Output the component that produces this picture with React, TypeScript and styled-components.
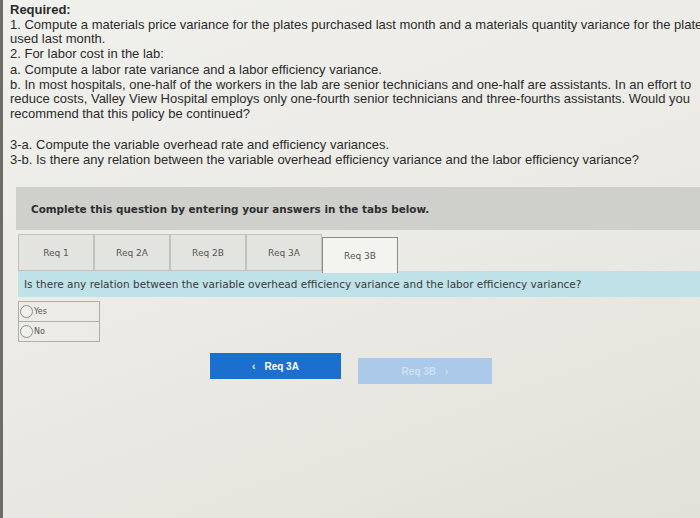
import React from 'react';
import styled, {createGlobalStyle} from 'styled-components';

const Global = createGlobalStyle`
    html, body {
        margin:0;
        padding:0;
        background:#e6e5de;
    }
`

const Screen = styled.div`
    width:700px;
    height:518px;
    overflow:hidden;
    box-sizing:border-box;
    border-left:3px solid #6e6c64;
    background:linear-gradient(160deg, #f0f0ec 0%, #ecebe6 45%, #e2e1d9 100%);
    display:flex;
    flex-direction:column;
`

const Prompt = styled.div`
    padding:3px 0 0 7px;
    font-family:"Liberation Sans", Arial, sans-serif;
    font-size:13px;
    line-height:14.5px;
    color:#2b2b2b;
`

const Line = styled.div<{$gap?: number, $bold?: boolean}>`
    white-space:nowrap;
    margin-top:${p => p.$gap || 0}px;
    font-weight:${p => p.$bold ? 700 : 400};
`

const Panel = styled.div`
    margin:20px 0 0 13px;
    display:flex;
    flex-direction:column;
`

const Banner = styled.div`
    height:43px;
    background:#cfcfcb;
    display:flex;
    align-items:center;
    padding-left:15px;
    font-family:"DejaVu Sans", Verdana, sans-serif;
    font-size:10.4px;
    font-weight:700;
    color:#2e2e2e;
`

const TabRow = styled.div`
    margin:3px 0 0 2px;
    display:flex;
    align-items:flex-end;
    height:38px;
`

const Tab = styled.div<{$active?: boolean}>`
    width:76px;
    height:${p => p.$active ? 36 : 37}px;
    box-sizing:border-box;
    border:1px solid ${p => p.$active ? '#8d8d88' : '#c2c2bd'};
    border-bottom:${p => p.$active ? 'none' : '1px solid #c2c2bd'};
    background:${p => p.$active ? '#f3f3ef' : '#e3e3df'};
    display:flex;
    align-items:center;
    justify-content:center;
    font-family:"DejaVu Sans", Verdana, sans-serif;
    font-size:9px;
    color:#555;
    margin-bottom:${p => p.$active ? -2 : 0}px;
    position:relative;
    z-index:${p => p.$active ? 1 : 0};
`

const Question = styled.div`
    margin-left:2px;
    height:26px;
    background:#bfe1e8;
    display:flex;
    align-items:center;
    padding-left:6px;
    font-family:"DejaVu Sans", Verdana, sans-serif;
    font-size:10.5px;
    color:#3a3a3a;
    white-space:nowrap;
`

const Options = styled.div`
    margin:4px 0 0 2px;
    width:80px;
    border:1px solid #aeaea9;
    display:flex;
    flex-direction:column;
`

const Option = styled.label`
    height:19px;
    display:flex;
    align-items:center;
    gap:1px;
    font-family:"DejaVu Sans", Verdana, sans-serif;
    font-size:8px;
    color:#555;
    &:not(:last-child){
        border-bottom:1px solid #aeaea9;
    }
`

const Radio = styled.span`
    width:11px;
    height:11px;
    margin-left:1px;
    border-radius:50%;
    border:1px solid #8f8f8a;
    background:#efefeb;
`

const Nav = styled.div`
    margin:11px 0 0 194px;
    display:flex;
    align-items:flex-start;
    gap:17px;
`

const NavButton = styled.div<{$disabled?: boolean}>`
    width:${p => p.$disabled ? 134 : 131}px;
    height:26px;
    margin-top:${p => p.$disabled ? 5 : 0}px;
    background:${p => p.$disabled ? '#abc9e8' : '#1b6fcf'};
    color:${p => p.$disabled ? '#cfe0f2' : '#fff'};
    display:flex;
    align-items:center;
    justify-content:center;
    gap:9px;
    font-family:"Liberation Sans", Arial, sans-serif;
    font-size:10px;
    font-weight:700;
`

const tabs = ['Req 1', 'Req 2A', 'Req 2B', 'Req 3A', 'Req 3B']

export default function App() {
    return (
        <Screen>
            <Global/>
            <Prompt>
                <Line $bold>Required:</Line>
                <Line>1. Compute a materials price variance for the plates purchased last month and a materials quantity variance for the plates</Line>
                <Line>used last month.</Line>
                <Line>2. For labor cost in the lab:</Line>
                <Line $gap={2}>a. Compute a labor rate variance and a labor efficiency variance.</Line>
                <Line>b. In most hospitals, one-half of the workers in the lab are senior technicians and one-half are assistants. In an effort to</Line>
                <Line>reduce costs, Valley View Hospital employs only one-fourth senior technicians and three-fourths assistants. Would you</Line>
                <Line>recommend that this policy be continued?</Line>
                <Line $gap={17}>3-a. Compute the variable overhead rate and efficiency variances.</Line>
                <Line>3-b. Is there any relation between the variable overhead efficiency variance and the labor efficiency variance?</Line>
            </Prompt>
            <Panel>
                <Banner>Complete this question by entering your answers in the tabs below.</Banner>
                <TabRow>
                    {tabs.map(t => <Tab key={t} $active={t === 'Req 3B'}>{t}</Tab>)}
                </TabRow>
                <Question>Is there any relation between the variable overhead efficiency variance and the labor efficiency variance?</Question>
                <Options>
                    <Option><Radio/>Yes</Option>
                    <Option><Radio/>No</Option>
                </Options>
                <Nav>
                    <NavButton><span>&lsaquo;</span>Req 3A</NavButton>
                    <NavButton $disabled>Req 3B<span>&rsaquo;</span></NavButton>
                </Nav>
            </Panel>
        </Screen>
    );
}
